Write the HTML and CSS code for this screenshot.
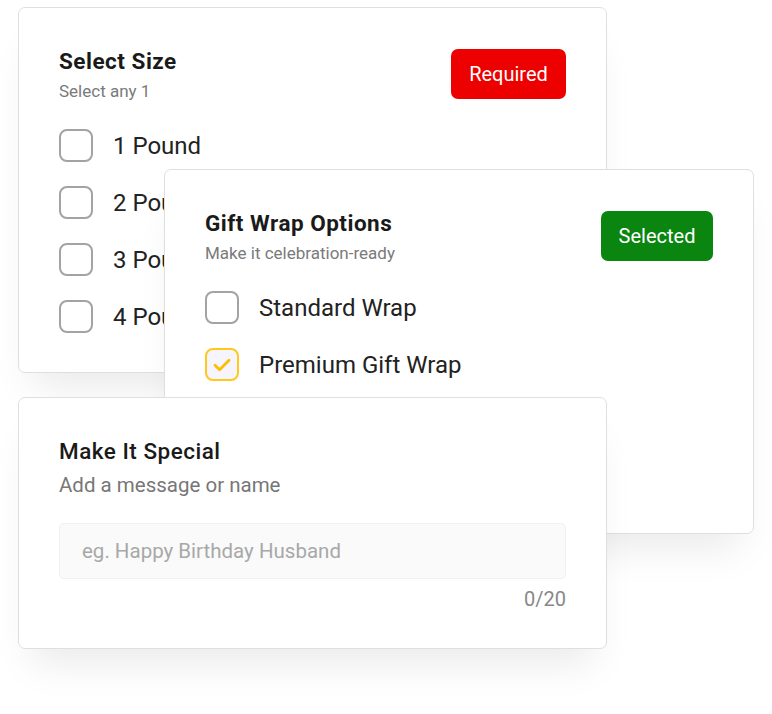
FILE: index.html
```html
<!DOCTYPE html>
<html lang="en">
<head>
<meta charset="utf-8">
<title>Cake options</title>
<link rel="stylesheet" href="styles.css">
</head>
<body>
<div class="canvas">
  <section class="card card-size">
    <div class="card-head">
      <div class="head-text">
        <h2 class="title">Select Size</h2>
        <p class="sub">Select any 1</p>
      </div>
      <span class="badge badge-required">Required</span>
    </div>
    <ul class="options">
      <li class="option"><span class="box"></span><span class="label">1 Pound</span></li>
      <li class="option"><span class="box"></span><span class="label">2 Pound</span></li>
      <li class="option"><span class="box"></span><span class="label">3 Pound</span></li>
      <li class="option"><span class="box"></span><span class="label">4 Pound</span></li>
    </ul>
  </section>

  <section class="card card-wrap">
    <div class="card-head">
      <div class="head-text">
        <h2 class="title">Gift Wrap Options</h2>
        <p class="sub">Make it celebration-ready</p>
      </div>
      <span class="badge badge-selected">Selected</span>
    </div>
    <ul class="options">
      <li class="option"><span class="box"></span><span class="label">Standard Wrap</span></li>
      <li class="option"><span class="box box-checked"><svg class="tick" viewBox="0 0 18 14" width="18" height="14"><path d="M2 7.2l4.6 4.5L16 2.3" fill="none" stroke="#fcbf00" stroke-width="2.8" stroke-linecap="round" stroke-linejoin="round"/></svg></span><span class="label">Premium Gift Wrap</span></li>
    </ul>
  </section>

  <section class="card card-special">
    <h2 class="title title-medium">Make It Special</h2>
    <p class="sub sub-large">Add a message or name</p>
    <div class="input">eg. Happy Birthday Husband</div>
    <div class="counter">0/20</div>
  </section>
</div>
</body>
</html>
```

FILE: styles.css
```css
* { box-sizing: border-box; }
html, body { margin: 0; padding: 0; background: #ffffff; }
body { font-family: Roboto, "Noto Sans", "Liberation Sans", sans-serif; color: #1c1c1c; }

.canvas { position: relative; width: 772px; height: 714px; overflow: hidden; }

.card {
  position: absolute;
  background: #ffffff;
  border: 1px solid #dfdfdf;
  border-radius: 7px;
  padding: 41px 40px 40px;
  box-shadow: 0 28px 38px -14px rgba(0, 0, 0, 0.085);
}
.card-size { left: 18px; top: 7px; width: 589px; height: 366px; z-index: 1; }
.card-wrap { left: 164px; top: 169px; width: 590px; height: 365px; z-index: 2; }
.card-special { left: 18px; top: 397px; width: 589px; height: 252px; z-index: 3; }

.card-head { display: flex; justify-content: space-between; align-items: flex-start; }

.title { margin: 0; font-size: 22.5px; line-height: 24px; font-weight: 700; color: #1a1a1a; letter-spacing: 0.5px; }
.title-medium { font-weight: 500; }
.sub { margin: 8px 0 0; font-size: 17px; line-height: 20px; color: #7a7a7a; }
.sub-large { margin-top: 10px; font-size: 20.5px; line-height: 24px; color: #777777; }

.badge {
  display: flex; align-items: center; justify-content: center;
  height: 50px; border-radius: 7px; color: #ffffff; font-size: 20px;
}
.badge-required { width: 115px; background: #ec0000; }
.badge-selected { width: 112px; background: #0a8510; }

.options { list-style: none; margin: 28px 0 0; padding: 0; display: flex; flex-direction: column; gap: 24px; }
.option { display: flex; align-items: center; gap: 20px; height: 33px; }
.box {
  width: 34px; height: 33px; flex: none;
  border: 2px solid #a3a3a3; border-radius: 8px;
  display: flex; align-items: center; justify-content: center;
}
.box-checked { border-color: #ffc81a; background: #f6f4fc; }
.tick { display: block; margin-top: 1px; }
.label { font-size: 24px; color: #222222; white-space: nowrap; }

.input {
  margin-top: 26px; height: 56px;
  background: #fafafa; border: 1px solid #f1f1f1; border-radius: 5px;
  padding: 0 22px; display: flex; align-items: center;
  font-size: 20.5px; color: #a8a8a8;
}
.counter { margin-top: 8px; text-align: right; font-size: 20px; line-height: 24px; color: #888888; }
```
